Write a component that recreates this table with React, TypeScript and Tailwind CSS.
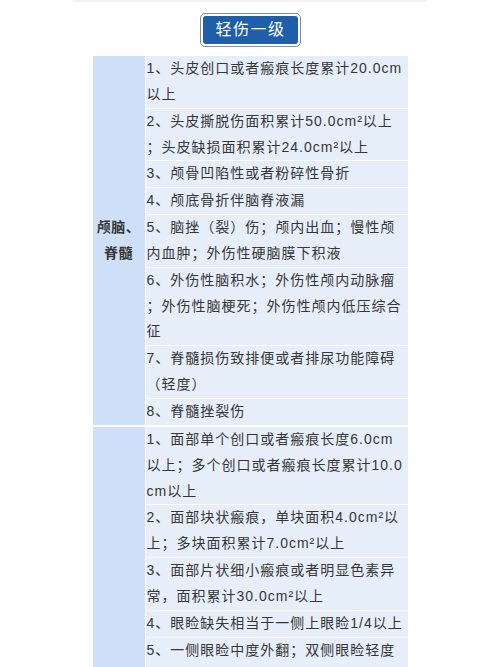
const sections: { label: string[]; rows: string[][] }[] = [
  {
    label: ["颅脑、", "脊髓"],
    rows: [
      ["1、头皮创口或者瘢痕长度累计20.0cm", "以上"],
      ["2、头皮撕脱伤面积累计50.0cm²以上", "；头皮缺损面积累计24.0cm²以上"],
      ["3、颅骨凹陷性或者粉碎性骨折"],
      ["4、颅底骨折伴脑脊液漏"],
      ["5、脑挫（裂）伤；颅内出血；慢性颅", "内血肿；外伤性硬脑膜下积液"],
      ["6、外伤性脑积水；外伤性颅内动脉瘤", "；外伤性脑梗死；外伤性颅内低压综合", "征"],
      ["7、脊髓损伤致排便或者排尿功能障碍", "（轻度）"],
      ["8、脊髓挫裂伤"],
    ],
  },
  {
    label: [],
    rows: [
      ["1、面部单个创口或者瘢痕长度6.0cm", "以上；多个创口或者瘢痕长度累计10.0", "cm以上"],
      ["2、面部块状瘢痕，单块面积4.0cm²以", "上；多块面积累计7.0cm²以上"],
      ["3、面部片状细小瘢痕或者明显色素异", "常，面积累计30.0cm²以上"],
      ["4、眼睑缺失相当于一侧上眼睑1/4以上"],
      ["5、一侧眼睑中度外翻；双侧眼睑轻度", "外翻"],
    ],
  },
];

export default function App() {
  return (
    <div className="w-[500px] h-[667px] overflow-hidden bg-white font-['Liberation_Sans','Noto_Sans_CJK_SC',sans-serif] text-[#363636]">
      <div className="mx-auto w-[354px] h-[2px] bg-[#f1f1f1]" />

      <div className="flex justify-center pt-[11px]">
        <div className="w-[101px] h-[34px] rounded-[5px] border-[1.5px] border-[#7b8ea3] bg-white p-[2px]">
          <div className="h-full rounded-[3px] bg-[#1f5ea8] flex items-center justify-center text-white text-[16px] tracking-[1.5px] pl-[1px]">
            轻伤一级
          </div>
        </div>
      </div>

      <div className="mx-auto mt-[9px] w-[315px] flex flex-col gap-[2px]">
        {sections.map((s, i) => (
          <div key={i} className="flex gap-px">
            <div className="w-[52px] shrink-0 bg-[#cde0f7] flex flex-col justify-center items-center font-bold text-[14px] leading-[26px] tracking-[0.5px]">
              {s.label.map((l, j) => (
                <div key={j} className="whitespace-nowrap">{l}</div>
              ))}
            </div>
            <div className="flex-1 flex flex-col gap-px">
              {s.rows.map((r, j) => (
                <div key={j} className="bg-[#e6eef9] pl-px text-[14px] leading-[25.85px] tracking-[1px]">
                  {r.map((line, k) => (
                    <div key={k} className="whitespace-nowrap">{line}</div>
                  ))}
                </div>
              ))}
            </div>
          </div>
        ))}
      </div>
    </div>
  );
}
